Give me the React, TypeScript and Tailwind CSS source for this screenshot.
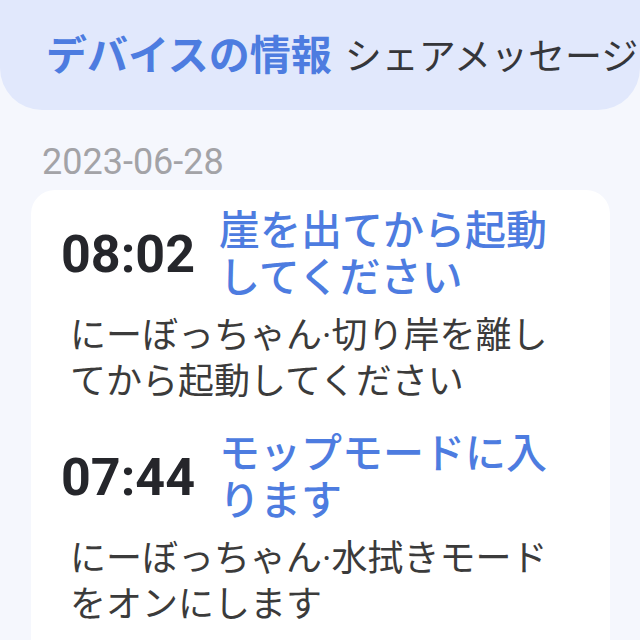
import React from 'react'

type LogItem = {
  time: string
  title: string
  body: string
}

const logs: LogItem[] = [
  {
    time: '08:02',
    title: '崖を出てから起動してください',
    body: 'にーぼっちゃん·切り岸を離してから起動してください',
  },
  {
    time: '07:44',
    title: 'モップモードに入ります',
    body: 'にーぼっちゃん·水拭きモードをオンにします',
  },
]

const jp = "font-['Roboto','Noto_Sans_CJK_JP',sans-serif]"

function LogRow({ item }: { item: LogItem }) {
  return (
    <div className="flex flex-col">
      <div className="flex items-center">
        <span className="w-[158px] shrink-0 font-['Roboto',sans-serif] text-[52px] font-bold leading-none text-[#25262b]">
          {item.time}
        </span>
        <p className={`${jp} text-[41px] font-medium leading-[47px] text-[#4d7ce0]`}>{item.title}</p>
      </div>
      <p className={`${jp} mt-[11px] ml-[9px] text-[36px] leading-[46px] text-[#3b3b3b]`}>{item.body}</p>
    </div>
  )
}

export default function App() {
  return (
    <div className="min-h-[640px] w-[640px] overflow-hidden bg-[#f5f7fd]">
      {/* tab strip */}
      <div className="flex h-[110px] items-baseline gap-[13px] overflow-hidden whitespace-nowrap rounded-b-[42px] bg-[#e1e8fc] pl-[46px] pt-[22px]">
        <span className="font-['Noto_Sans_CJK_JP',sans-serif] text-[41px] font-bold text-[#4d7ce0]">デバイスの情報</span>
        <span className="font-['Noto_Sans_CJK_JP',sans-serif] text-[37px] text-[#35363a]">シェアメッセージ</span>
      </div>

      <div className="px-[31px]">
        <p className="mt-[30px] pl-[11px] font-['Roboto',sans-serif] text-[36px] leading-[44px] text-[#a3a3a7]">
          2023-06-28
        </p>

        <div className="mt-[6px] flex w-[579px] flex-col gap-[26px] rounded-[24px] bg-white pb-[40px] pl-[30px] pr-[40px] pt-[18px]">
          {logs.map((item) => (
            <LogRow key={item.time} item={item} />
          ))}
        </div>
      </div>
    </div>
  )
}
